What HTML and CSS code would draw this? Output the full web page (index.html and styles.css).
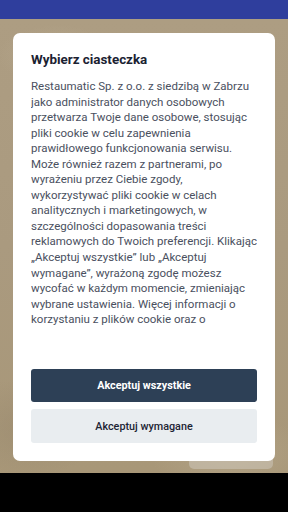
FILE: index.html
```html
<!DOCTYPE html>
<html lang="pl">
<head>
<meta charset="utf-8">
<title>Wybierz ciasteczka</title>
<link rel="stylesheet" href="styles.css">
</head>
<body>
<div class="screen">
  <div class="appbar"></div>
  <div class="stage">
    <div class="ghost"></div>
    <div class="modal">
      <h1 class="title">Wybierz ciasteczka</h1>
      <div class="scroll">
        <p class="text">Restaumatic Sp. z o.o. z siedzibą w Zabrzu jako administrator danych osobowych przetwarza Twoje dane osobowe, stosując pliki cookie w celu zapewnienia prawidłowego funkcjonowania serwisu. Może również razem z partnerami, po wyrażeniu przez Ciebie zgody, wykorzystywać pliki cookie w celach analitycznych i marketingowych, w szczególności dopasowania treści reklamowych do Twoich preferencji. Klikając „Akceptuj wszystkie” lub „Akceptuj wymagane”, wyrażoną zgodę możesz wycofać w każdym momencie, zmieniając wybrane ustawienia. Więcej informacji o korzystaniu z plików cookie oraz o przysługujących Ci prawach znajdziesz w Polityce prywatności.</p>
      </div>
      <div class="actions">
        <button class="btn btn-primary">Akceptuj wszystkie</button>
        <button class="btn btn-secondary">Akceptuj wymagane</button>
      </div>
    </div>
  </div>
  <div class="navbar"></div>
</div>
</body>
</html>
```
FILE: styles.css
```css
* { box-sizing: border-box; }
html, body { margin: 0; padding: 0; }
body {
  width: 288px;
  height: 512px;
  overflow: hidden;
  font-family: Roboto, "Noto Sans", sans-serif;
  background: #000;
}
.screen {
  display: flex;
  flex-direction: column;
  height: 512px;
}
.appbar {
  height: 19px;
  background: #2f3e9d;
  flex: none;
}
.stage {
  position: relative;
  flex: 1;
  padding: 14px 13px 0 13px;
  background:
    radial-gradient(ellipse 60px 30px at 20% 8%, rgba(190,176,150,0.5), transparent),
    radial-gradient(ellipse 80px 40px at 80% 96%, rgba(190,176,150,0.45), transparent),
    radial-gradient(ellipse 70px 50px at 10% 90%, rgba(150,134,108,0.5), transparent),
    linear-gradient(180deg, #ad9d82 0%, #aa9a7f 50%, #a89778 100%);
}
.ghost {
  position: absolute;
  right: 15px;
  top: 440px;
  width: 84px;
  height: 10px;
  border-radius: 0 0 5px 5px;
  background: rgba(205,198,186,0.55);
}
.modal {
  position: relative;
  background: #fff;
  border-radius: 7px;
  padding: 18px;
  height: 428px;
  display: flex;
  flex-direction: column;
}
.title {
  margin: 0;
  font-size: 13.4px;
  line-height: 18px;
  font-weight: 700;
  color: #1b2232;
}
.scroll {
  margin-top: 10px;
  height: 249px;
  overflow: hidden;
}
.text {
  margin: 0;
  font-size: 11.5px;
  line-height: 15.55px;
  color: #4a5060;
}
.actions {
  margin-top: auto;
  display: flex;
  flex-direction: column;
  gap: 7px;
}
.btn {
  display: block;
  width: 100%;
  border: 0;
  border-radius: 3px;
  font-family: Roboto, "Noto Sans", sans-serif;
  font-size: 10.8px;
  cursor: pointer;
}
.btn-primary {
  height: 33px;
  background: #2d4056;
  color: #fff;
  font-weight: 700;
}
.btn-secondary {
  height: 34px;
  background: #e9edf0;
  color: #1c2434;
  font-weight: 500;
}
.navbar {
  height: 39px;
  background: #000;
  flex: none;
}
```
